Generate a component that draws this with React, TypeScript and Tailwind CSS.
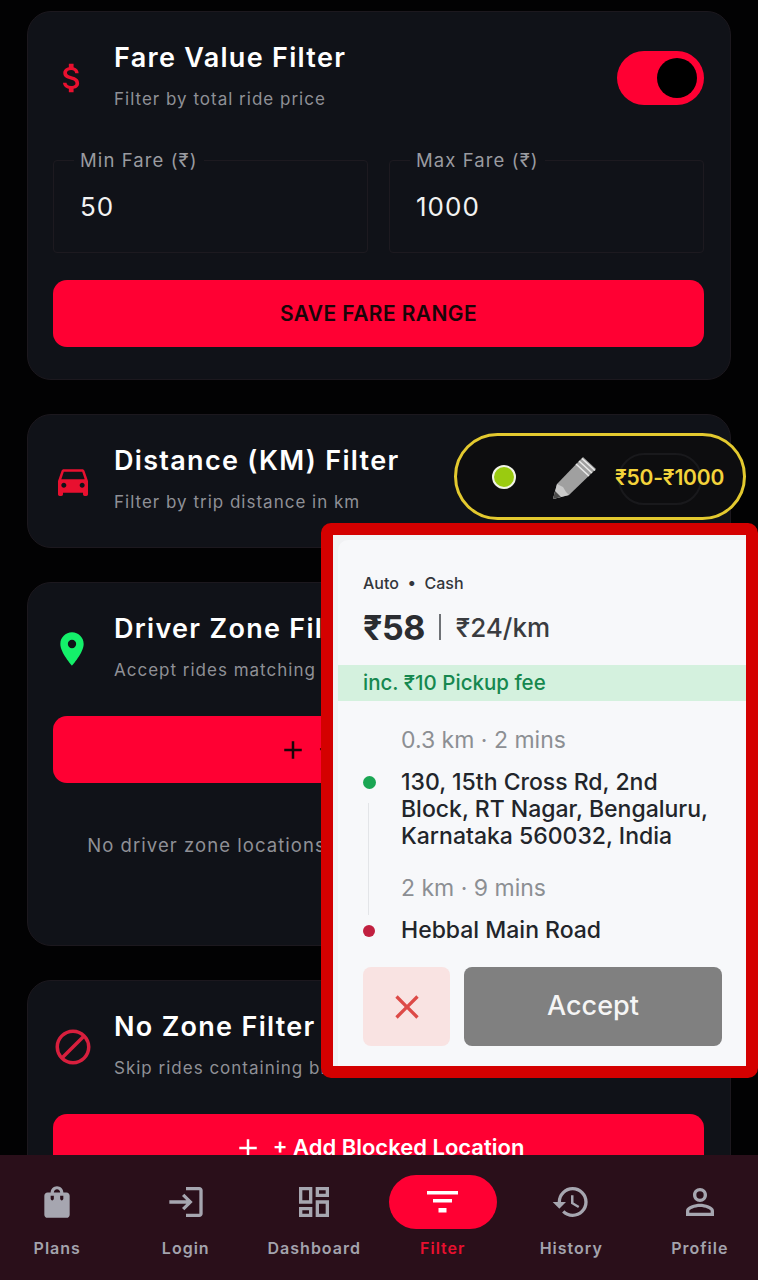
import React from "react";
import { MdAttachMoney, MdDirectionsCar, MdLocationOn, MdBlock, MdShoppingBag, MdLogin, MdOutlineDashboard, MdHistory, MdPersonOutline, MdAdd, MdClose } from "react-icons/md";

const sans = "font-['Inter','Noto_Sans',sans-serif]";

function Header({ icon, title, sub, right }: { icon: React.ReactNode; title: string; sub: string; right?: React.ReactNode }) {
  return (
    <div className="flex h-[69px]">
      <div className="flex w-[61px] shrink-0 items-center pt-[5px]">{icon}</div>
      <div className="flex-1 pt-[1px] whitespace-nowrap">
        <div className="text-[27px] leading-[32px] font-semibold tracking-[1.3px] text-white">{title}</div>
        <div className="mt-[13px] text-[17px] leading-[24px] tracking-[1px] text-[#8f9096]">{sub}</div>
      </div>
      {right}
    </div>
  );
}

function Field({ label, value }: { label: string; value: string }) {
  return (
    <fieldset className="h-[105px] rounded-[4px] border border-[#1d1a20] pl-[26px]">
      <legend className="-ml-[6px] px-[6px] text-[18.5px] leading-[24px] tracking-[1.1px] text-[#9a9ba0]">{label}</legend>
      <div className="mt-[19px] text-[26px] leading-[32px] tracking-[1px] text-[#f2f2f2]">{value}</div>
    </fieldset>
  );
}

function RedButton({ children, dark }: { children: React.ReactNode; dark?: boolean }) {
  return (
    <div className={`flex h-[67px] items-center justify-center rounded-[14px] bg-[#ff0033] font-semibold ${dark ? "text-[#1a0508]" : "text-white"}`}>
      {children}
    </div>
  );
}

function Card({ children, className }: { children: React.ReactNode; className: string }) {
  return (
    <section className={`shrink-0 rounded-[24px] border border-[#1c181e] bg-[#101218] pt-[29px] pr-[26px] pl-[25px] ${className}`}>{children}</section>
  );
}

function Pencil() {
  return (
    <svg width="46" height="46" viewBox="0 0 46 46">
      <path d="M1 45 L5 30 L31 3 L44 15 L17 41 Z" fill="#a0a0a0" />
      <path d="M1 45 L5 30 L11 33 L14 38 L17 41 Z" fill="#c9c9c9" />
      <path d="M1 45 L3 37 L9 43 Z" fill="#4a4a4a" />
      <path d="M27 7 L40 19 M30 4.5 L43 16.5 M24 10 L37 22" stroke="#e9e9e9" strokeWidth="1.6" />
    </svg>
  );
}

function FilterGlyph() {
  return (
    <svg width="31" height="22" viewBox="0 0 31 22" fill="#ffffff">
      <rect x="0" y="0" width="31" height="3.5" />
      <rect x="6" y="8" width="19" height="3.5" />
      <rect x="11.5" y="17" width="8" height="4.5" />
    </svg>
  );
}

const nav = [
  { label: "Plans", icon: <MdShoppingBag size={38} /> },
  { label: "Login", icon: <MdLogin size={40} /> },
  { label: "Dashboard", icon: <MdOutlineDashboard size={40} /> },
  { label: "Filter", active: true },
  { label: "History", icon: <MdHistory size={40} /> },
  { label: "Profile", icon: <MdPersonOutline size={42} /> },
];

export default function App() {
  return (
    <div className={`relative flex h-[1280px] w-[758px] flex-col overflow-hidden bg-[#020203] ${sans}`}>
      <main className="flex min-h-0 flex-1 flex-col gap-[34px] overflow-hidden px-[27px] pt-[11px]">
        <Card className="pb-[32px]">
          <Header
            icon={<MdAttachMoney size={38} className="text-[#e8102f]" />}
            title="Fare Value Filter"
            sub="Filter by total ride price"
            right={
              <div className="mt-[10px] flex h-[54px] w-[87px] items-center justify-end rounded-full bg-[#ff0033] pr-[7px]">
                <div className="h-[40px] w-[40px] rounded-full bg-black" />
              </div>
            }
          />
          <div className="mt-[38px] grid grid-cols-2 gap-[21px]">
            <Field label="Min Fare (₹)" value="50" />
            <Field label="Max Fare (₹)" value="1000" />
          </div>
          <div className="mt-[27px]">
            <RedButton dark><span className="text-[21px] tracking-[0.4px]">SAVE FARE RANGE</span></RedButton>
          </div>
        </Card>

        <Card className="pb-[34px]">
          <Header
            icon={<MdDirectionsCar size={40} className="text-[#e8102f]" />}
            title="Distance (KM) Filter"
            sub="Filter by trip distance in km"
          />
        </Card>

        <Card className="h-[364px]">
          <Header
            icon={<MdLocationOn size={40} className="-ml-[1px] text-[#14f06a]" />}
            title="Driver Zone Filter"
            sub="Accept rides matching driver zones"
          />
          <div className="mt-[35px]">
            <RedButton dark><span className="flex items-center gap-[10px] text-[22px]"><MdAdd size={30} />+ Add Location</span></RedButton>
          </div>
          <p className="mt-[49px] text-center text-[18.5px] leading-[26px] tracking-[1.05px] whitespace-nowrap text-[#8f9096]">No driver zone locations added. All rides are accepted now.</p>
        </Card>

        <Card className="">
          <Header
            icon={<MdBlock size={42} className="-ml-[1px] text-[#d81f3d]" />}
            title="No Zone Filter"
            sub="Skip rides containing blocked locations"
          />
          <div className="mt-[35px]">
            <RedButton><span className="flex items-center gap-[10px] text-[22px]"><MdAdd size={30} />+ Add Blocked Location</span></RedButton>
          </div>
        </Card>
      </main>

      <nav className="z-10 h-[125px] shrink-0 overflow-hidden bg-[#2a0f1a]">
        <div className="-ml-[7px] grid w-[771px] grid-cols-6 pt-[20px]">
          {nav.map((n) => (
            <div key={n.label} className="flex flex-col items-center">
              <div className={`flex h-[54px] items-center justify-center ${n.active ? "w-[108px] rounded-full bg-[#ff0033]" : "text-[#a6a6b0]"}`}>
                {n.active ? <FilterGlyph /> : n.icon}
              </div>
              <div className={`mt-[5px] text-[16px] leading-[28px] font-semibold tracking-[1px] ${n.active ? "text-[#e8102f]" : "text-[#a3a3ad]"}`}>{n.label}</div>
            </div>
          ))}
        </div>
      </nav>

      {/* Floating status pill */}
      <div className="absolute top-[433px] left-[454px] z-20 flex h-[87px] w-[292px] items-center rounded-full border-[3px] border-[#e3c92f] bg-[#0d0d0f] pl-[35px]">
        <div className="h-[24px] w-[24px] rounded-full border-2 border-[#f2f4e8] bg-[#9acb10]" />
        <div className="ml-[36px]"><Pencil /></div>
        <div className="relative mt-[3px] ml-[17px] text-[21px] font-semibold tracking-[-0.2px] whitespace-nowrap text-[#f3d33b]">
          <span className="absolute top-[-9px] left-[3px] h-[52px] w-[84px] rounded-[26px] border-2 border-[#19191c]" />
          <span className="relative">₹50-₹1000</span>
        </div>
      </div>

      {/* Ride request overlay */}
      <div className="absolute top-[523px] left-[321px] z-20 h-[555px] w-[437px] rounded-[10px] border-[12px] border-[#d40000] bg-[#f1f2f4]">
        <div className="mt-[5px] ml-[5px] h-[526px] rounded-tl-[10px] bg-[#f7f8fa]">
          <div className="pt-[32px] pl-[25px]">
            <div className="text-[16px] leading-[22px] font-medium text-[#33363b]">Auto&nbsp;&nbsp;•&nbsp;&nbsp;Cash</div>
            <div className="mt-[9px] flex h-[48px] items-center">
              <span className="text-[34px] font-bold tracking-[-0.5px] text-[#2b2d31]">₹58</span>
              <span className="mr-[15px] ml-[14px] h-[26px] w-[2px] bg-[#6f7276]" />
              <span className="text-[26px] font-medium text-[#3a3c40]">₹24/km</span>
            </div>
          </div>
          <div className="mt-[14px] flex h-[36px] items-center bg-[#d4f1de] pl-[25px] text-[20.5px] font-medium text-[#16884f]">inc. ₹10 Pickup fee</div>
          <div className="relative mt-[26px] pl-[25px]">
            <div className="absolute top-[76px] left-[30px] h-[112px] w-[1px] bg-[#e3e5e8]" />
            <div className="grid grid-cols-[38px_1fr] pr-[33px] text-[23px] leading-[27px]">
              <div />
              <div className="text-[#8c8f93]">0.3 km · 2 mins</div>
              <div className="mt-[15px] flex h-[27px] items-center"><span className="h-[13px] w-[13px] rounded-full bg-[#1aa653]" /></div>
              <div className="mt-[15px] font-medium text-[#22252a]">130, 15th Cross Rd, 2nd Block, RT Nagar, Bengaluru, Karnataka 560032, India</div>
              <div />
              <div className="mt-[25px] text-[#8c8f93]">2 km · 9 mins</div>
              <div className="mt-[15px] flex h-[27px] items-center"><span className="h-[12px] w-[12px] rounded-full bg-[#c1203f]" /></div>
              <div className="mt-[15px] font-medium text-[#22252a]">Hebbal Main Road</div>
            </div>
          </div>
          <div className="mt-[23px] flex gap-[14px] pr-[24px] pl-[25px]">
            <div className="flex h-[79px] w-[87px] items-center justify-center rounded-[8px] bg-[#f9e3e2] text-[#dd4a47]"><MdClose size={40} /></div>
            <div className="flex h-[79px] flex-1 items-center justify-center rounded-[8px] bg-[#808080] text-[27px] font-medium text-[#f5f5f5]">Accept</div>
          </div>
        </div>
      </div>
    </div>
  );
}
